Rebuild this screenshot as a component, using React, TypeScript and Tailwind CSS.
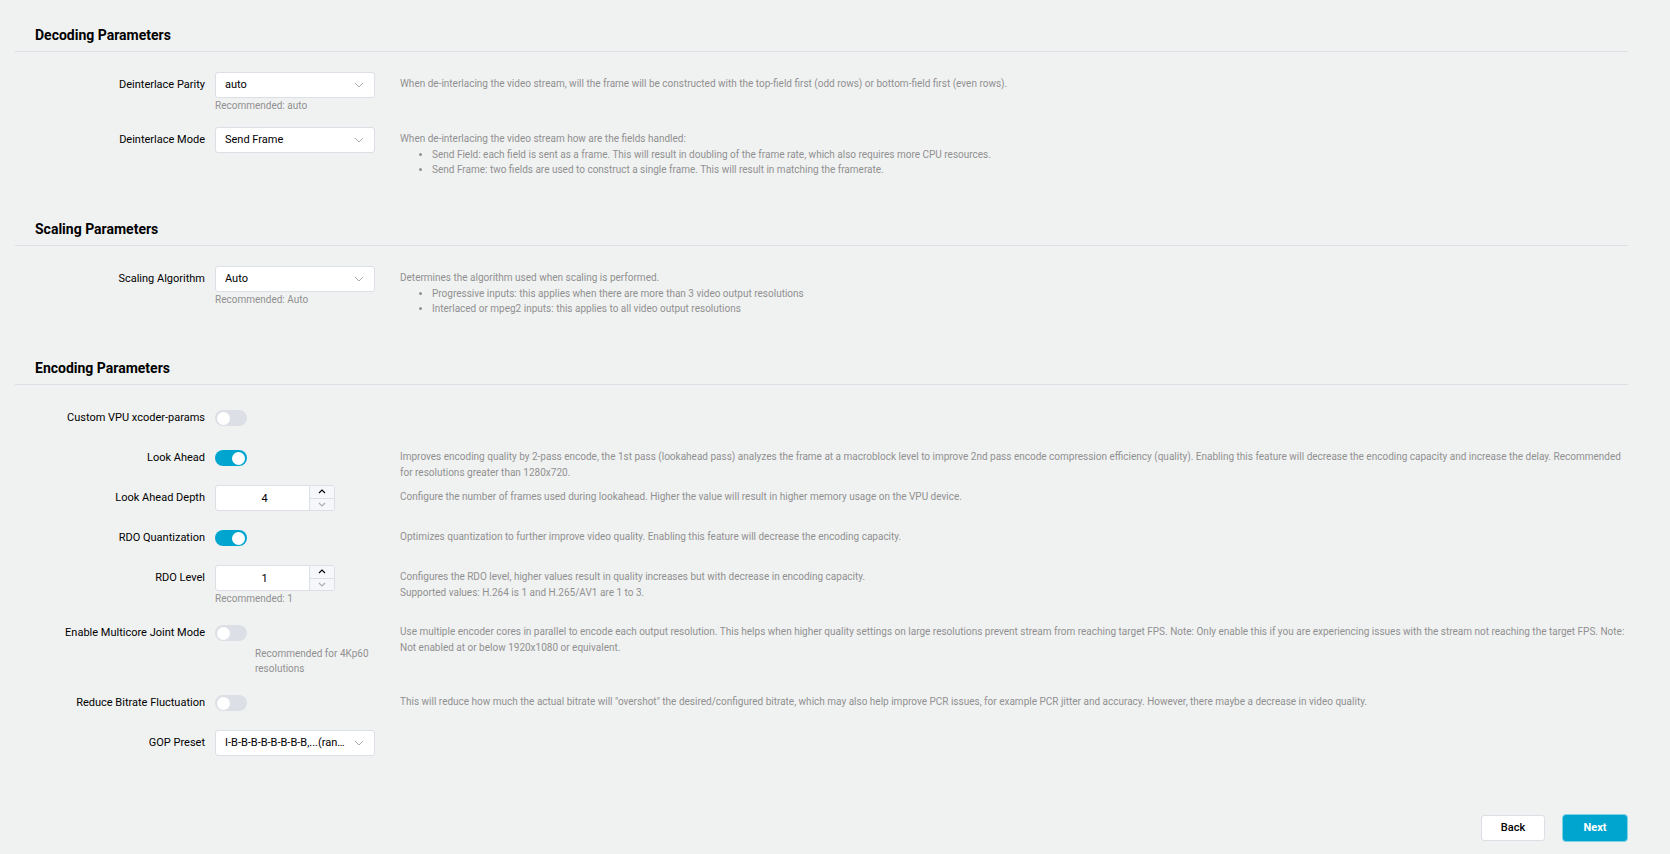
import React, { ReactNode, useState } from "react";

interface SectionProps {
  title: string;
  children: ReactNode;
}

interface FieldProps {
  id: string;
  label: string;
  hint?: string;
  hintIndented?: boolean;
  description?: ReactNode;
  children: ReactNode;
}

interface SelectProps {
  id: string;
  options: string[];
}

interface ToggleProps {
  id: string;
  initial?: boolean;
}

interface NumberInputProps {
  id: string;
  initial: number;
  min: number;
}

function Chevron(): ReactNode {
  return (
    <svg
      viewBox="0 0 10 6"
      className="h-full w-full"
      fill="none"
      stroke="currentColor"
      aria-hidden="true"
    >
      <path d="M1 1l4 4 4-4" />
    </svg>
  );
}

function StepArrow({ up = false }: { up?: boolean }): ReactNode {
  return (
    <svg
      viewBox="0 0 8 5"
      className="h-[5px] w-2"
      fill="none"
      stroke="currentColor"
      strokeWidth="1.1"
      aria-hidden="true"
    >
      <path d={up ? "M1 4 4 1l3 3" : "M1 1l3 3 3-3"} />
    </svg>
  );
}

function Section({ title, children }: SectionProps): ReactNode {
  return (
    <section>
      <h2 className="border-b border-[#dcdfe6] pb-1.5 pl-5 text-sm leading-5 font-bold text-black">
        {title}
      </h2>
      <div className="pt-5">{children}</div>
    </section>
  );
}

function Field({
  id,
  label,
  hint,
  hintIndented = false,
  description,
  children,
}: FieldProps): ReactNode {
  return (
    <div className="group grid grid-cols-[190px_160px_minmax(0,1fr)]">
      <label
        htmlFor={id}
        className="h-[26px] text-right text-[11px] leading-[26px] text-black"
      >
        {label}
      </label>
      <div className="ml-2.5 w-40 pb-3.5 group-last:pb-0">
        <div className="flex h-[26px] items-center">{children}</div>
        {hint && (
          <p
            className={`text-[10px] leading-[15px] text-[#909090] ${hintIndented ? "ml-10" : ""}`}
          >
            {hint}
          </p>
        )}
      </div>
      <div className="pt-1 pl-[35px] text-[10px] leading-4 text-[#909090]">
        {description}
      </div>
    </div>
  );
}

function Select({ id, options }: SelectProps): ReactNode {
  return (
    <div className="relative w-full">
      <select
        id={id}
        className="block h-[26px] w-full appearance-none rounded-[3px] border border-[#dcdfe6] bg-white pr-6 pl-[9px] text-[11px] text-black"
      >
        {options.map((option) => (
          <option key={option}>{option}</option>
        ))}
      </select>
      <span className="pointer-events-none absolute top-2.5 right-[11px] h-1.5 w-2.5 text-[#a8abb2]">
        <Chevron />
      </span>
    </div>
  );
}

function Toggle({ id, initial = false }: ToggleProps): ReactNode {
  const [checked, setChecked] = useState(initial);

  return (
    <input
      id={id}
      type="checkbox"
      role="switch"
      checked={checked}
      onChange={(e) => setChecked(e.target.checked)}
      className="relative h-4 w-8 appearance-none rounded-full bg-[#dcdfe6] before:absolute before:top-0.5 before:left-0.5 before:h-[13px] before:w-[13px] before:rounded-full before:bg-white before:content-[''] checked:bg-[#00a5cf] checked:before:left-[17px]"
    />
  );
}

function NumberInput({ id, initial, min }: NumberInputProps): ReactNode {
  const [value, setValue] = useState(initial);

  return (
    <div className="flex h-[26px] w-[120px] overflow-hidden rounded-[3px] border border-[#dcdfe6] bg-white">
      <input
        id={id}
        type="text"
        inputMode="numeric"
        value={value}
        onChange={(e) => setValue(Number(e.target.value) || min)}
        className="min-w-0 flex-1 pt-0.5 pl-1 text-center text-[11px] text-black outline-none"
      />
      <div className="flex w-[25px] flex-col border-l border-[#dcdfe6] bg-[#f5f7fa]">
        <button
          type="button"
          aria-label="Increase"
          onClick={() => setValue(value + 1)}
          className="flex flex-1 items-center justify-center border-b border-[#dcdfe6] text-black"
        >
          <StepArrow up />
        </button>
        <button
          type="button"
          aria-label="Decrease"
          onClick={() => setValue(Math.max(min, value - 1))}
          className="flex flex-1 items-center justify-center text-[#a8abb2]"
        >
          <StepArrow />
        </button>
      </div>
    </div>
  );
}

function BulletList({ items }: { items: string[] }): ReactNode {
  return (
    <ul className="list-disc pl-8 leading-[15px]">
      {items.map((item) => (
        <li key={item}>{item}</li>
      ))}
    </ul>
  );
}

export default function App(): ReactNode {
  return (
    <main className="min-h-screen bg-[#f0f2f2] pt-[25px] pr-[42px] pb-3 pl-[15px] font-['Roboto',sans-serif]">
      <form onSubmit={(e) => e.preventDefault()}>
        <div className="flex flex-col gap-[42px]">
          <Section title="Decoding Parameters">
            <Field
              id="deinterlace-parity"
              label="Deinterlace Parity"
              hint="Recommended: auto"
              description="When de-interlacing the video stream, will the frame will be constructed with the top-field first (odd rows) or bottom-field first (even rows)."
            >
              <Select id="deinterlace-parity" options={["auto"]} />
            </Field>
            <Field
              id="deinterlace-mode"
              label="Deinterlace Mode"
              description={
                <>
                  When de-interlacing the video stream how are the fields
                  handled:
                  <BulletList
                    items={[
                      "Send Field: each field is sent as a frame. This will result in doubling of the frame rate, which also requires more CPU resources.",
                      "Send Frame: two fields are used to construct a single frame. This will result in matching the framerate.",
                    ]}
                  />
                </>
              }
            >
              <Select
                id="deinterlace-mode"
                options={["Send Frame", "Send Field"]}
              />
            </Field>
          </Section>

          <Section title="Scaling Parameters">
            <Field
              id="scaling-algorithm"
              label="Scaling Algorithm"
              hint="Recommended: Auto"
              description={
                <>
                  Determines the algorithm used when scaling is performed.
                  <BulletList
                    items={[
                      "Progressive inputs: this applies when there are more than 3 video output resolutions",
                      "Interlaced or mpeg2 inputs: this applies to all video output resolutions",
                    ]}
                  />
                </>
              }
            >
              <Select id="scaling-algorithm" options={["Auto"]} />
            </Field>
          </Section>

          <Section title="Encoding Parameters">
            <Field id="custom-xcoder" label="Custom VPU xcoder-params">
              <Toggle id="custom-xcoder" />
            </Field>
            <Field
              id="look-ahead"
              label="Look Ahead"
              description={
                <>
                  Improves encoding quality by 2-pass encode, the 1st pass
                  (lookahead pass) analyzes the frame at a macroblock level to
                  improve 2nd pass encode compression efficiency (quality).
                  Enabling this feature will decrease the encoding capacity and
                  increase the delay. Recommended
                  <br />
                  for resolutions greater than 1280x720.
                </>
              }
            >
              <Toggle id="look-ahead" initial />
            </Field>
            <Field
              id="look-ahead-depth"
              label="Look Ahead Depth"
              description="Configure the number of frames used during lookahead. Higher the value will result in higher memory usage on the VPU device."
            >
              <NumberInput id="look-ahead-depth" initial={4} min={4} />
            </Field>
            <Field
              id="rdo-quantization"
              label="RDO Quantization"
              description="Optimizes quantization to further improve video quality. Enabling this feature will decrease the encoding capacity."
            >
              <Toggle id="rdo-quantization" initial />
            </Field>
            <Field
              id="rdo-level"
              label="RDO Level"
              hint="Recommended: 1"
              description={
                <>
                  Configures the RDO level, higher values result in quality
                  increases but with decrease in encoding capacity.
                  <br />
                  Supported values: H.264 is 1 and H.265/AV1 are 1 to 3.
                </>
              }
            >
              <NumberInput id="rdo-level" initial={1} min={1} />
            </Field>
            <Field
              id="multicore-joint"
              label="Enable Multicore Joint Mode"
              hint="Recommended for 4Kp60 resolutions"
              hintIndented
              description={
                <>
                  Use multiple encoder cores in parallel to encode each output
                  resolution. This helps when higher quality settings on large
                  resolutions prevent stream from reaching target FPS. Note:
                  Only enable this if you are experiencing issues with the
                  stream not reaching the target FPS. Note:
                  <br />
                  Not enabled at or below 1920x1080 or equivalent.
                </>
              }
            >
              <Toggle id="multicore-joint" />
            </Field>
            <Field
              id="reduce-bitrate"
              label="Reduce Bitrate Fluctuation"
              description={
                'This will reduce how much the actual bitrate will "overshot" the desired/configured bitrate, which may also help improve PCR issues, for example PCR jitter and accuracy. However, there maybe a decrease in video quality.'
              }
            >
              <Toggle id="reduce-bitrate" />
            </Field>
            <Field id="gop-preset" label="GOP Preset">
              <Select id="gop-preset" options={["I-B-B-B-B-B-B-B-B,...(ran…"]} />
            </Field>
          </Section>
        </div>

        <div className="mt-[58px] flex items-center justify-end gap-[17px]">
          <button
            type="button"
            className="h-[26px] w-16 rounded-[3px] border border-[#dcdfe6] bg-white text-[11px] font-medium text-black"
          >
            Back
          </button>
          <button
            type="submit"
            className="h-7 w-[66px] rounded-[4px] border border-[#80d2e7] bg-[#00a5cf] text-[11px] font-bold text-white"
          >
            Next
          </button>
        </div>
      </form>
    </main>
  );
}
